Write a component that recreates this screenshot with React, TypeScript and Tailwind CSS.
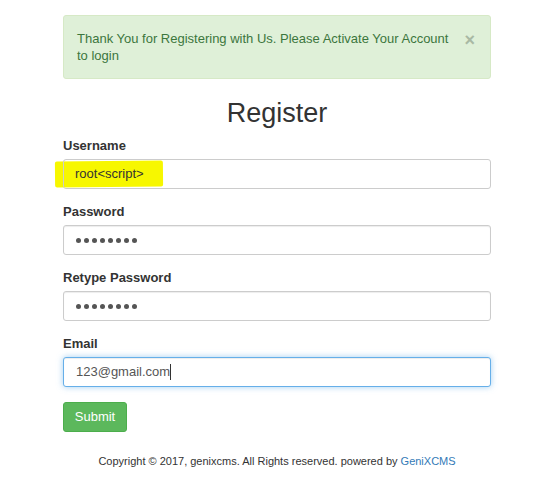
import React from "react";

const font = { fontFamily: '"Liberation Sans", Arial, sans-serif' };

function Label({ children }: { children: React.ReactNode }) {
  return <div className="text-[13px] leading-4 font-bold text-[#333] mb-[5px]">{children}</div>;
}

function Field({ children, focus }: { children: React.ReactNode; focus?: boolean }) {
  return (
    <div
      className={
        "relative h-[30px] rounded-[3px] border px-[12px] flex items-center text-[13px] text-[#555] bg-white " +
        (focus
          ? "border-[#66afe9] shadow-[inset_0_1px_1px_rgba(0,0,0,0.075),0_0_6px_rgba(102,175,233,0.6)]"
          : "border-[#ccc] shadow-[inset_0_1px_1px_rgba(0,0,0,0.075)]")
      }
    >
      {children}
    </div>
  );
}

function Dots() {
  return (
    <div className="flex gap-[3px]" aria-label="password">
      {[0, 1, 2, 3, 4, 5, 6, 7].map((i) => (
        <span key={i} className="w-[5px] h-[5px] rounded-full bg-[#555]" />
      ))}
    </div>
  );
}

export default function App() {
  return (
    <div className="min-h-[492px] bg-white" style={font}>
      <div className="ml-[63px] w-[428px] pt-[15px]">
        {/* alert */}
        <div className="relative rounded-[3px] border border-[#d6e9c6] bg-[#dff0d8] pl-[13px] pr-[40px] py-[14px] text-[13px] leading-[17px] text-[#3c763d]">
          Thank You for Registering with Us. Please Activate Your Account to login
          <span className="absolute right-[15px] top-[14px] text-[18px] leading-[20px] font-bold text-[#a9b9a4]">×</span>
        </div>

        <h1 className="mt-[16px] text-center text-[27px] leading-[36px] text-[#333]">Register</h1>

        <div className="mt-[7px]">
          <Label>Username</Label>
          <div className="relative">
            <div className="absolute left-[-8px] top-[2px] w-[108px] h-[26px] bg-[#f7f700] rounded-[2px] rotate-[-0.6deg]" />
            <div className="relative h-[30px] rounded-[3px] border border-[#ccc] px-[11px] flex items-center text-[13px] text-[#333]">
              <span className="relative">root&lt;script&gt;</span>
            </div>
          </div>
        </div>

        <div className="mt-[15px]">
          <Label>Password</Label>
          <Field>
            <Dots />
          </Field>
        </div>

        <div className="mt-[15px]">
          <Label>Retype Password</Label>
          <Field>
            <Dots />
          </Field>
        </div>

        <div className="mt-[15px]">
          <Label>Email</Label>
          <Field focus>
            <span className="text-[#555]">123@gmail.com</span>
            <span className="w-px h-[16px] bg-[#333]" />
          </Field>
        </div>

        <button className="mt-[15px] h-[30px] w-[64px] rounded-[3px] border border-[#4cae4c] bg-[#5cb85c] text-[13px] text-white">
          Submit
        </button>

        <div className="mt-[22px] text-center text-[11px] leading-[14px] text-[#333]">
          Copyright © 2017, genixcms. All Rights reserved. powered by{" "}
          <span className="text-[#337ab7]">GeniXCMS</span>
        </div>
      </div>
    </div>
  );
}
